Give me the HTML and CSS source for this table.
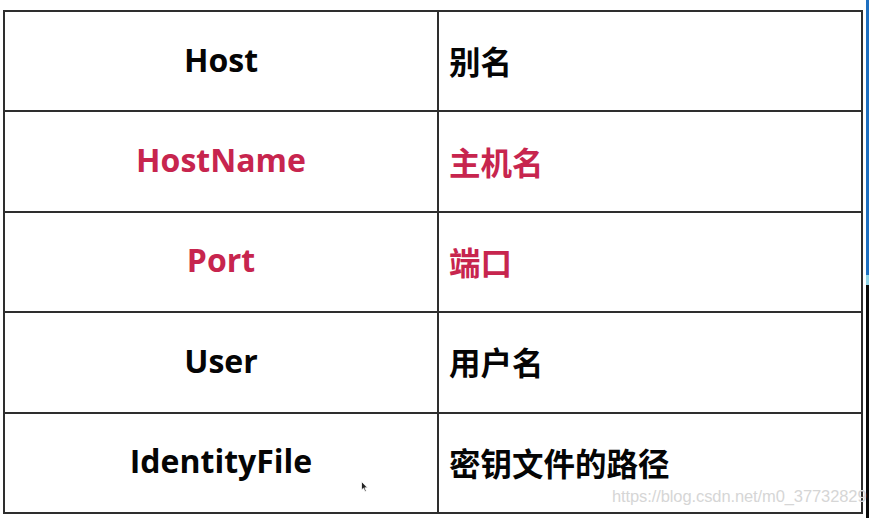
FILE: index.html
```html
<!DOCTYPE html>
<html lang="zh-CN">
<head>
<meta charset="utf-8">
<link rel="stylesheet" href="styles.css">
</head>
<body>
<div class="page">
  <div class="grid">
    <div class="cell key">Host</div>
    <div class="cell val">别名</div>
    <div class="cell key red">HostName</div>
    <div class="cell val red">主机名</div>
    <div class="cell key red">Port</div>
    <div class="cell val red">端口</div>
    <div class="cell key">User</div>
    <div class="cell val">用户名</div>
    <div class="cell key">IdentityFile</div>
    <div class="cell val">密钥文件的路径</div>
  </div>
  <div class="edge"><span class="edge-blue"></span><span class="edge-cyan"></span><span class="edge-black"></span></div>
  <div class="watermark">https://blog.csdn.net/m0_37732829</div>
  <svg class="cursor" width="8" height="12" viewBox="0 0 8 12"><path d="M0.5 0.5 L0.5 9 L2.5 7.2 L4 10.5 L5.3 9.9 L3.8 6.8 L6.5 6.8 Z" fill="#222" stroke="#fff" stroke-width="0.8"/></svg>
</div>
</body>
</html>
```
FILE: styles.css
```css
html, body {
  margin: 0;
  padding: 0;
  background: #fff;
}
.page {
  position: relative;
  width: 869px;
  height: 518px;
  overflow: hidden;
  padding: 10px 0 0 3px;
  box-sizing: border-box;
}
.grid {
  display: grid;
  width: 860px;
  height: 504px;
  box-sizing: border-box;
  padding: 2px;
  gap: 2px;
  background: #2e2e2e;
  grid-template-columns: 432px 1fr;
  grid-template-rows: repeat(5, 1fr);
}
.cell {
  background: #fff;
  display: flex;
  align-items: center;
  font-family: "Open Sans", "Noto Sans CJK SC", sans-serif;
  font-weight: 700;
  font-size: 32px;
  color: #050505;
  padding-bottom: 4px;
}
.key {
  justify-content: center;
}
.val {
  padding-left: 10px;
  font-family: "Noto Sans CJK SC", sans-serif;
  font-size: 31.5px;
  padding-bottom: 2px;
}
.red {
  color: #c7254e;
}
.edge {
  position: absolute;
  right: 0;
  top: 0;
  width: 3px;
  height: 518px;
  display: flex;
  flex-direction: column;
}
.edge-blue {
  height: 275px;
  background: #1e6fc0;
}
.edge-cyan {
  height: 10px;
  background: #8fd3e6;
}
.edge-black {
  flex: 1;
  background: #0a0a0a;
}
.watermark {
  position: absolute;
  left: 612px;
  top: 487px;
  font-family: "Liberation Sans", Arial, sans-serif;
  font-size: 16.5px;
  color: #d6d6d6;
  letter-spacing: -0.1px;
}
.cursor {
  position: absolute;
  left: 361px;
  top: 481px;
}
```
